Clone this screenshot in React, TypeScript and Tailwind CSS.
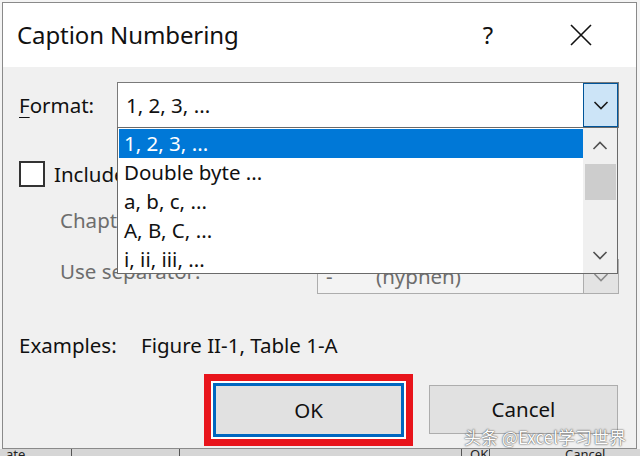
import React from 'react';

const ui = "font-['Noto_Sans','Open_Sans',sans-serif]";

function Chevron({ dir, className }: { dir: 'up' | 'down'; className?: string }) {
  return (
    <svg width="16" height="10" viewBox="0 0 16 10" className={className}>
      <path
        d={dir === 'down' ? 'M1.5 2 L8 8.5 L14.5 2' : 'M1.5 8 L8 1.5 L14.5 8'}
        fill="none"
        stroke="currentColor"
        strokeWidth="1.6"
      />
    </svg>
  );
}

const items = ['1, 2, 3, ...', 'Double byte ...', 'a, b, c, ...', 'A, B, C, ...', 'i, ii, iii, ...'];

export default function App() {
  return (
    <div className={`w-[640px] h-[456px] overflow-hidden bg-[#f4f4f4] relative ${ui}`}>
      <div className="flex flex-col h-full">
        {/* dialog window */}
        <div className="ml-[2px] mt-[2px] w-[635px] h-[447px] border border-[#8a8a8a] bg-[#f0f0f0] flex flex-col shrink-0">
          {/* title bar */}
          <div className="h-[64px] bg-white flex items-center pl-[14px] shrink-0">
            <span className="text-[24px] text-[#111] tracking-[-0.1px]">Caption Numbering</span>
            <span className="ml-auto text-[24px] text-[#111] w-[20px] text-center">?</span>
            <span className="ml-[72px] mr-[44px]">
              <svg width="22" height="22" viewBox="0 0 22 22">
                <path d="M1 1 L21 21 M21 1 L1 21" stroke="#111" strokeWidth="1.6" />
              </svg>
            </span>
          </div>

          {/* body */}
          <div className="flex flex-col pl-[16px] pr-[17px] text-[20.5px] text-[#111]">
            {/* format */}
            <div className="flex items-center mt-[15px] h-[46px]">
              <span className="w-[98px]">
                <span className="underline underline-offset-[4px] decoration-1">F</span>ormat:
              </span>
              <div className="relative flex-1 h-[46px] flex bg-white border border-[#7a7a7a]">
                <span className="flex-1 pl-[8px] flex items-center">1, 2, 3, ...</span>
                <div className="w-[35px] bg-[#cce4f7] border border-[#005499] flex items-center justify-center text-[#1a1a1a]">
                  <Chevron dir="down" />
                </div>

                {/* open list */}
                <div className="absolute left-[-1px] top-[44px] w-[501px] h-[147px] bg-white border border-[#6a6a6a] flex z-10">
                  <div className="flex-1 flex flex-col pt-[1px] pl-[1px]">
                    {items.map((t, i) => (
                      <div
                        key={t}
                        className={`h-[29px] flex items-center pl-[5px] ${i === 0 ? 'bg-[#0078d7] text-white' : 'text-[#111]'}`}
                      >
                        {t}
                      </div>
                    ))}
                  </div>
                  <div className="w-[34px] bg-[#f0f0f0] flex flex-col items-center">
                    <div className="h-[36px] flex items-center text-[#505050]">
                      <Chevron dir="up" />
                    </div>
                    <div className="w-[31px] h-[36px] bg-[#cdcdcd]" />
                    <div className="mt-auto h-[36px] flex items-center text-[#505050]">
                      <Chevron dir="down" />
                    </div>
                  </div>
                </div>
              </div>
            </div>

            {/* include chapter number */}
            <div className="flex items-center mt-[32px] h-[28px]">
              <div className="w-[26px] h-[26px] border-2 border-[#333] bg-white" />
              <span className="ml-[9px]">Include chapter number</span>
            </div>

            <div className="flex items-center mt-[14px] h-[36px] pl-[41px] text-[#6d6d6d]">
              <span>Chapter starts with style:</span>
            </div>

            <div className="flex items-center mt-[21px] h-[35px] pl-[41px] text-[#6d6d6d]">
              <span className="w-[257px] -translate-y-[5px]">Use separator:</span>
              <div className="flex-1 h-[35px] flex border border-[#adadad] bg-[#f3f3f3]">
                <span className="pl-[8px] w-[58px] flex items-center">-</span>
                <span className="flex-1 flex items-center">(hyphen)</span>
                <div className="w-[35px] bg-[#e3e3e3] border-l border-[#adadad] flex items-center justify-center text-[#8a8a8a]">
                  <Chevron dir="down" />
                </div>
              </div>
            </div>

            {/* examples */}
            <div className="flex items-center mt-[36px] h-[30px]">
              <span className="w-[122px]">Examples:</span>
              <span>Figure II-1, Table 1-A</span>
            </div>

            {/* buttons */}
            <div className="flex items-start mt-[14px]">
              <div className="ml-[185px] w-[209px] h-[72px] border-[7px] border-[#e8141b] bg-white p-[2px]">
                <div className="w-full h-full border-[3px] border-[#0067c0] bg-[#e1e1e1] flex items-center justify-center">
                  OK
                </div>
              </div>
              <div className="ml-[16px] mt-[11px] w-[189px] h-[49px] border border-[#adadad] bg-[#e1e1e1] flex items-center justify-center">
                Cancel
              </div>
            </div>
          </div>
        </div>

        {/* document table under the dialog */}
        <div className="flex h-[10px] bg-[#d6d6d6] text-[13px] leading-[10px] text-[#222] overflow-hidden">
          <span className="w-[72px] border-r border-[#555] pl-[6px]">ate caption</span>
          <span className="w-[108px] border-r border-[#555] pl-[6px]">..........</span>
          <span className="w-[282px] border-r border-[#555]" />
          <span className="w-[28px] border-r border-[#555] pl-[8px]">OK</span>
          <span className="flex-1 pl-[75px]">Cancel</span>
        </div>
      </div>

      {/* watermark */}
      <div className="absolute left-[464px] top-[424px] text-[17px] text-white font-['Noto_Sans_CJK_SC',sans-serif] [text-shadow:0_0_2px_#444,0_0_1px_#444] opacity-90">
        头条 @Excel学习世界
      </div>
    </div>
  );
}
